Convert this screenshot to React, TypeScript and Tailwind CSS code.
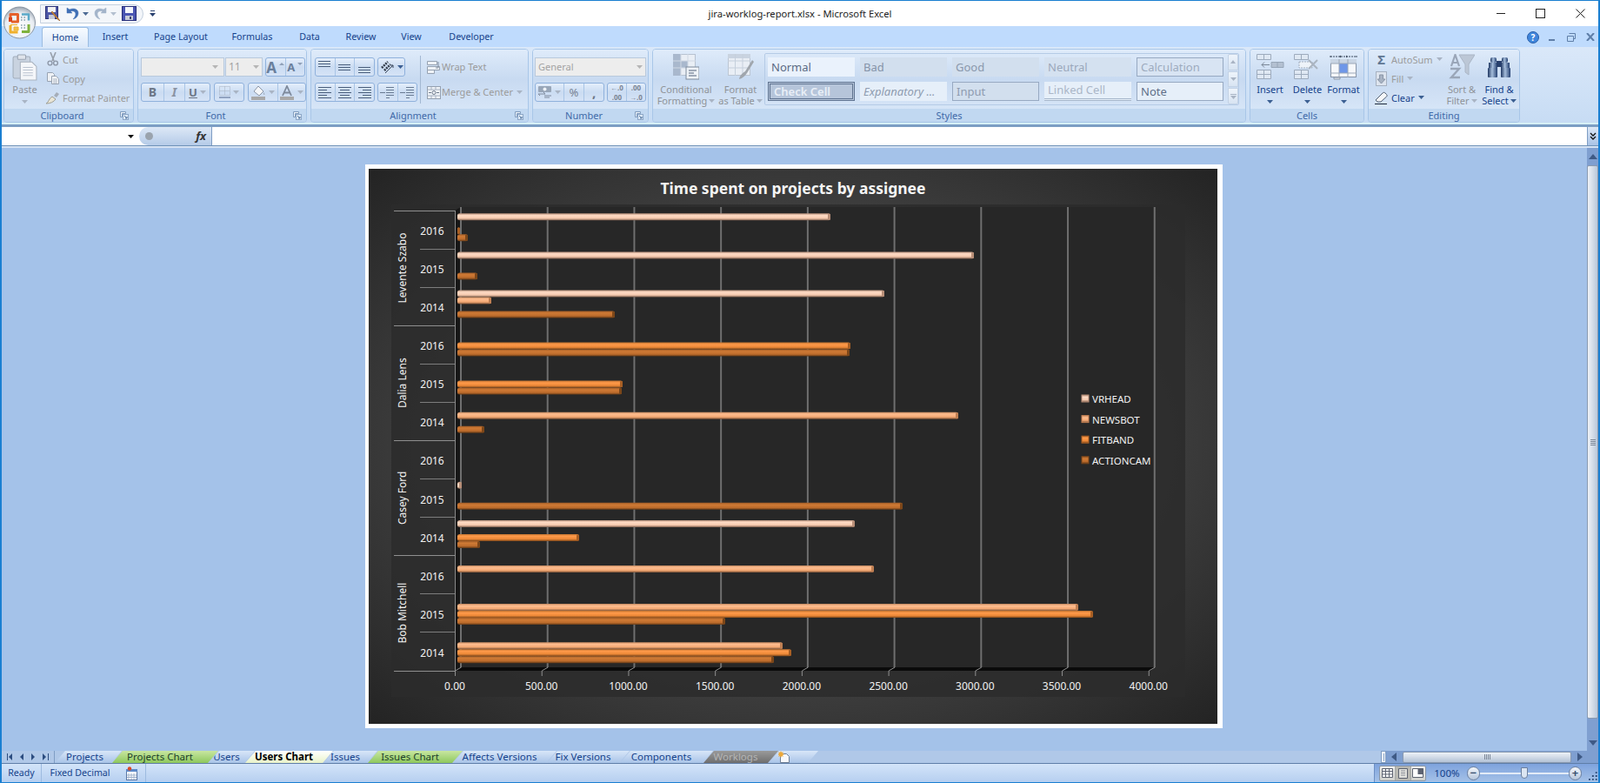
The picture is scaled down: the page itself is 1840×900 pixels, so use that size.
import React from "react";

const ui = "font-['Open_Sans',sans-serif]";

type Kids = { children?: React.ReactNode; className?: string };

const Caret = ({ color = "#8f99a8" }: { color?: string }) => (
  <svg width="7" height="4" viewBox="0 0 7 4" className="shrink-0">
    <path d="M0 0h7L3.5 4z" fill={color} />
  </svg>
);

const Launcher = () => (
  <svg width="10" height="10" viewBox="0 0 10 10" className="shrink-0">
    <path d="M.5.5h6v2h-4v4h-2z" fill="#eef4fb" stroke="#7f9bbd" />
    <rect x="3.5" y="3.5" width="6" height="6" fill="#dbe8f6" stroke="#8ea8c8" />
    <path d="M5 5l3 3M8 6v2H6" stroke="#55779f" fill="none" />
  </svg>
);

const Group = ({ label, launcher, className, children }: Kids & { label: string; launcher?: boolean }) => (
  <div className={`flex h-[85px] shrink-0 flex-col overflow-hidden rounded-[4px] border border-[#a8c6e8] ${className}`}>
    <div className="relative flex h-[69px] bg-linear-to-b from-[#dfebfa] via-[#c8daf1] to-[#d6e5f7]">{children}</div>
    <div className="flex h-[15px] items-center bg-[#c1d8f1]">
      <span className="flex-1 text-center text-[11px] leading-none text-[#3f69a8]">{label}</span>
      {launcher && (
        <span className="mr-[5px]">
          <Launcher />
        </span>
      )}
    </div>
  </div>
);

const BtnBox = ({ className, children }: Kids) => (
  <div className={`flex h-[22px] items-stretch overflow-hidden rounded-[3px] border border-[#8fb1dc] bg-linear-to-b from-[#e4eefb] via-[#cbdcf2] to-[#d5e3f6] ${className}`}>
    {children}
  </div>
);

const BtnCell = ({ className, children }: Kids) => (
  <div className={`flex items-center justify-center gap-[3px] border-r border-[#a9c5e6] last:border-r-0 ${className}`}>{children}</div>
);

const Lines = ({ rows, color = "#4a5f7c" }: { rows: [number, number, number][]; color?: string }) => (
  <svg width="17" height="16" viewBox="0 0 17 16">
    {rows.map(([x, y, w], i) => (
      <rect key={i} x={x} y={y} width={w} height="1" fill={color} />
    ))}
  </svg>
);

const PasteIcon = () => (
  <svg width="31" height="31" viewBox="0 0 28 30">
    <rect x="1" y="3" width="19" height="24" rx="1.5" fill="#c9d3e0" stroke="#a3aebb" />
    <rect x="6" y="1" width="9" height="5" rx="1" fill="#dfe4eb" stroke="#9aa5b3" />
    <path d="M9 9h13l5 5v15H9z" fill="#f4f6f9" stroke="#a9b3bf" />
    <path d="M12 15h11M12 18h11M12 21h11M12 24h11" stroke="#b9c2cf" />
  </svg>
);
const CutIcon = () => (
  <svg width="14" height="16" viewBox="0 0 14 16">
    <path d="M4 0l4 10M10 0L6 10" stroke="#98a0ab" strokeWidth="1.6" fill="none" />
    <circle cx="3.5" cy="12.5" r="2.4" fill="none" stroke="#8e98a8" strokeWidth="1.4" />
    <circle cx="10" cy="12.5" r="2.4" fill="none" stroke="#8e98a8" strokeWidth="1.4" />
  </svg>
);
const CopyIcon = () => (
  <svg width="14" height="14" viewBox="0 0 14 14">
    <path d="M.5.5h6l2 2v8h-8z" fill="#eef1f5" stroke="#98a3b2" />
    <path d="M5.5 4.5h5l3 3v6h-8z" fill="#f5f7fa" stroke="#98a3b2" />
    <path d="M7 8h5M7 10h5M7 12h5" stroke="#aab4c2" />
  </svg>
);
const BrushIcon = () => (
  <svg width="17" height="15" viewBox="0 0 17 15">
    <path d="M10 5l3-4 3 2-3 4z" fill="#a5adb8" />
    <path d="M1 14c3-1 3-6 7-8l4 3c-2 3-6 5-11 5z" fill="#e9e5d6" stroke="#9f9f94" />
  </svg>
);
const CondIcon = () => (
  <svg width="30" height="30" viewBox="0 0 30 30">
    <rect x="0.5" y="0.5" width="25" height="24" fill="#e9eef5" stroke="#b7c2d1" />
    <path d="M0 0h9v25H0z M9 8h8v8H9z" fill="#a9b8cd" />
    <path d="M9 0v25M17 0v25M0 8h26M0 16h26" stroke="#cfd8e4" />
    <rect x="15" y="15" width="15" height="14" fill="#eef2f7" stroke="#7f8c9d" />
    <path d="M18 19h9M18 22h6M18 25h9" stroke="#52627a" />
  </svg>
);
const TableIcon = () => (
  <svg width="30" height="30" viewBox="0 0 30 30">
    <rect x="0.5" y="0.5" width="25" height="24" fill="#e9eef5" stroke="#bcc6d3" />
    <path d="M0 0h26v5H0z" fill="#c9d3e0" />
    <path d="M8.500 0v25M17 0v25M0 8h26M0 16h26" stroke="#c5cfdc" />
    <path d="M13 29c1-5 4-7 7-9l8-13 2 2-8 13c-2 3-5 6-9 7z" fill="#a0a6ad" />
  </svg>
);
const InsertIcon = () => (
  <svg width="32" height="30" viewBox="0 0 32 30">
    <path d="M.5 .5h16v6h-16zM8.500 .5v6M.5 18.500h16v10h-16zM.5 23.500h16M8.500 18.500v10" fill="#dfe8f3" stroke="#9dabbd" />
    <path d="M17 9.500h14v6H17zM24 9.500v6" fill="#b3c0d1" stroke="#97a6b8" />
    <path d="M15 12.500H6M9 9.500l-3 3 3 3" fill="none" stroke="#7b8898" />
  </svg>
);
const DeleteIcon = () => (
  <svg width="32" height="30" viewBox="0 0 32 30">
    <path d="M.5 .5h16v6h-16zM8.500 .5v6M.5 18.500h16v10h-16zM.5 23.500h16M8.500 18.500v10" fill="#dfe8f3" stroke="#9dabbd" />
    <rect x="6" y="9" width="15" height="7" fill="#eef3f9" stroke="#a3afbf" strokeDasharray="2 1" />
    <path d="M17 7l10 10M27 7L17 17" stroke="#aab4c0" strokeWidth="2" />
  </svg>
);
const FormatIcon = () => (
  <svg width="32" height="30" viewBox="0 0 32 30">
    <path d="M1 2v2M31 2v2M1 3h30" stroke="#3d4a5e" strokeDasharray="2 1" />
    <path d="M11 3l2-1.500v3zM21 3l-2-1.500v3z" fill="#3d4a5e" />
    <rect x="1.500" y="6.500" width="29" height="20" fill="#f6f8fb" stroke="#8794a8" />
    <rect x="1" y="6" width="30" height="5" fill="#c9d5e4" />
    <rect x="11" y="11" width="10" height="11" fill="#6f97e8" />
    <path d="M11 6v21M21 6v21M1 11h30M1 22h30" stroke="#9ba7b8" />
    <path d="M5 27h7v2H5z" fill="#e6ebf2" stroke="#8d99aa" />
  </svg>
);
const EraserIcon = () => (
  <svg width="15" height="15" viewBox="0 0 15 15">
    <path d="M1 10l8-8c1-1 2-1 3 0l1.500 1.500c.8.8.8 1.800 0 2.600L7 12H3z" fill="#f4f6f8" stroke="#4f5c70" />
    <path d="M0 14.500h14" stroke="#1f2a3a" />
  </svg>
);
const FillIcon = () => (
  <svg width="13" height="17" viewBox="0 0 13 17">
    <rect x=".5" y=".5" width="12" height="16" fill="#dde4ee" stroke="#a6b1c1" />
    <path d="M4.500 4h4v5h2.500l-4.500 5L2 9h2.500z" fill="#a8b3c3" stroke="#8a96a8" />
  </svg>
);
const SortIcon = () => (
  <svg width="30" height="30" viewBox="0 0 30 30">
    <path d="M12 1h18l-7 11v12l-4-3v-9z" fill="#bcc7d6" stroke="#aab6c6" />
    <path d="M3 14L7.500 1 12 14M5 10h5" fill="none" stroke="#9aa6b8" strokeWidth="2.200" />
    <path d="M2 17h10L3 27h10" fill="none" stroke="#9aa6b8" strokeWidth="2.400" />
  </svg>
);
const FindIcon = () => (
  <svg width="28" height="28" viewBox="0 0 28 28">
    <defs>
      <linearGradient id="bino" x1="0" x2="1" y1="0" y2="0">
        <stop offset="0" stopColor="#1d3560" />
        <stop offset=".45" stopColor="#a5bddb" />
        <stop offset="1" stopColor="#243f70" />
      </linearGradient>
    </defs>
    <rect x="4" y="3" width="7" height="6" rx="2" fill="url(#bino)" />
    <rect x="17" y="3" width="7" height="6" rx="2" fill="url(#bino)" />
    <rect x="2" y="9" width="10" height="8" fill="url(#bino)" />
    <rect x="16" y="9" width="10" height="8" fill="url(#bino)" />
    <rect x="1" y="15" width="11" height="11" rx="1" fill="url(#bino)" />
    <rect x="16" y="15" width="11" height="11" rx="1" fill="url(#bino)" />
    <rect x="11" y="7" width="6" height="7" fill="#273f6c" />
  </svg>
);
const OfficeLogo = () => (
  <svg width="37" height="38" viewBox="0 0 37 38">
    <defs>
      <radialGradient id="orb" cx=".5" cy=".65" r=".65">
        <stop offset="0" stopColor="#ffffff" />
        <stop offset=".7" stopColor="#e9edf2" />
        <stop offset="1" stopColor="#9aa4b0" />
      </radialGradient>
    </defs>
    <circle cx="18.500" cy="19" r="18" fill="url(#orb)" stroke="#8b96a3" />
    <path d="M8 14V9.500h8.500V18H9" fill="none" stroke="#e5602a" strokeWidth="3" strokeLinejoin="round" />
    <path d="M21 9.500h8v7" fill="none" stroke="#5aa9c9" strokeWidth="2.500" strokeLinejoin="round" />
    <path d="M8 22v8h8.500" fill="none" stroke="#f0b02c" strokeWidth="3" strokeLinejoin="round" />
    <path d="M29 21v8.500h-8" fill="none" stroke="#7fb23c" strokeWidth="3" strokeLinejoin="round" />
    <path d="M8 21.500h8M12 24h5v4h-5z" fill="#eec14f" stroke="#f0b02c" />
    <path d="M20 13h1.500M23.500 13H25M20 16h1.500M23.500 16H25M20 22h1.500M23.500 22H25M20 25h1.500M23.500 25H25" stroke="#7f9aa8" strokeWidth="1.500" />
    <path d="M6 13h4v5H6z" fill="#d9441b" />
  </svg>
);
const SaveAsIcon = () => (
  <svg width="17" height="17" viewBox="0 0 17 17">
    <rect x=".5" y=".5" width="14" height="14" fill="#4d57a6" stroke="#2b3278" />
    <rect x="3" y="1" width="9" height="6" fill="#f3f3f3" />
    <rect x="4" y="10" width="7" height="5" fill="#c4c8d8" />
    <path d="M7 7l7 8 3 2-2-3-7-8z" fill="#e09a3a" stroke="#8a4a1d" strokeWidth=".6" />
  </svg>
);
const SaveIcon = () => (
  <svg width="17" height="17" viewBox="0 0 17 17">
    <rect x=".5" y=".5" width="16" height="16" fill="#4a55b2" stroke="#252c78" />
    <rect x="4" y="1" width="9" height="7" fill="#f4f6fb" />
    <rect x="4" y="11" width="9" height="5" fill="#c8ccd8" />
    <rect x="9" y="12" width="2" height="3" fill="#3a4070" />
  </svg>
);
const UndoIcon = ({ flip, color }: { flip?: boolean; color: string }) => (
  <svg width="15" height="15" viewBox="0 0 15 15" className={flip ? "-scale-x-100" : ""}>
    <path d="M1 1v6h6L5 5c3-1 6 0 6 3 0 2-1 4-3 6 4-1 6-4 6-7 0-5-6-6-10-4z" fill={color} stroke={color} strokeWidth=".5" />
  </svg>
);
const MacroIcon = () => (
  <svg width="15" height="16" viewBox="0 0 15 16">
    <rect x="1.500" y="3.500" width="12" height="12" fill="#fff" stroke="#5c78a5" />
    <path d="M1 3h13v3H1z" fill="#5d8ac9" />
    <path d="M4 8v7M7 8v7M10 8v7M2 10h11M2 12.500h11" stroke="#a1b3cc" />
    <circle cx="5" cy="2.500" r="2.200" fill="#d8492a" />
  </svg>
);
const NewSheetIcon = () => (
  <svg width="15" height="14" viewBox="0 0 15 14">
    <path d="M2.500 3.500h7l3 3v7h-10z" fill="#f6f8fb" stroke="#6d7f96" />
    <path d="M3 0l1 2 2-1-1 2 2 1-2 1 1 2-2-1-1 2-1-2-2 1 1-2-2-1 2-1-1-2 2 1z" fill="#eda93a" />
  </svg>
);

const SideItem = ({ icon, label, caret, dark, className }: { icon: React.ReactNode; label: string; caret?: boolean; dark?: boolean; className?: string }) => (
  <div className={`flex h-[22px] items-center whitespace-nowrap ${className}`}>
    <span className="flex w-[17px] shrink-0 justify-center">{icon}</span>
    <span className={`ml-[3px] text-[11px] leading-none ${dark ? "text-[#15428b]" : "text-[#9b9b9b]"}`}>{label}</span>
    {caret && (
      <span className="ml-[4px]">
        <Caret color={dark ? "#3b5f92" : "#a9b4c4"} />
      </span>
    )}
  </div>
);

const BigButton = ({ icon, lines, dark, className }: { icon: React.ReactNode; lines: string[]; dark?: boolean; className?: string }) => (
  <div className={`flex flex-col items-center pt-[5px] ${className}`}>
    <div className="flex h-[30px] items-center">{icon}</div>
    <div className={`mt-[4px] flex flex-col items-center text-[11px] leading-[13px] ${dark ? "text-[#15428b]" : "text-[#8f9398]"}`}>
      <span className="whitespace-nowrap">{lines[0]}</span>
      {lines.length > 1 ? (
        <span className="flex items-center gap-[2px] whitespace-nowrap">
          {lines[1]} <Caret color={dark ? "#3b5f92" : "#a9b4c4"} />
        </span>
      ) : (
        <span className="mt-[6px]">
          <Caret color={dark ? "#3b5f92" : "#a9b4c4"} />
        </span>
      )}
    </div>
  </div>
);

const StyleCell = ({ className, children }: Kids) => (
  <div className={`flex h-[22px] w-[100px] items-center overflow-hidden whitespace-nowrap pl-[4px] text-[13px] leading-none ${className}`}>{children}</div>
);

const Ribbon = () => (
  <div className="h-[89px] border-b-[2px] border-[#d6f0f6] bg-linear-to-b from-[#dae8f9] to-[#c7dcf4]">
    <div className="flex gap-[4px] pl-[2px] pt-[2px]">
      <Group label="Clipboard" launcher className="w-[150px]">
        <div className="flex w-[47px] flex-col items-center pt-[5px]">
          <PasteIcon />
          <span className="mt-[3px] text-[11px] leading-[13px] text-[#8f9398]">Paste</span>
          <span className="mt-[6px]">
            <Caret color="#a9b4c4" />
          </span>
        </div>
        <div className="flex flex-col">
          <SideItem icon={<CutIcon />} label="Cut" />
          <SideItem icon={<CopyIcon />} label="Copy" />
          <SideItem icon={<BrushIcon />} label="Format Painter" />
        </div>
      </Group>

      <Group label="Font" launcher className="w-[195px]">
        <div className="flex flex-col gap-[7px] pl-[3px] pt-[9px]">
          <div className="flex gap-[1px]">
            <div className="flex h-[22px] w-[96px] items-center justify-end border border-[#b9c9dc] bg-[#ededed] pr-[6px]">
              <Caret color="#b5b5b5" />
            </div>
            <div className="flex h-[22px] w-[43px] items-center justify-between border border-[#b9c9dc] bg-[#ededed] px-[3px] text-[12px] text-[#a3a3a3]">
              11 <Caret color="#b5b5b5" />
            </div>
            <BtnBox className="ml-[2px] w-[46px]">
              <BtnCell className="w-[23px] gap-0">
                <span className="font-['Liberation_Serif',serif] text-[17px] font-bold leading-none text-[#6a7f9c]">A</span>
                <span className="mb-[8px] h-0 w-0 border-x-[3px] border-b-[3px] border-x-transparent border-b-[#8fa0b8]" />
              </BtnCell>
              <BtnCell className="w-[22px] gap-0">
                <span className="font-['Liberation_Serif',serif] text-[13px] font-bold leading-none text-[#6a7f9c]">A</span>
                <span className="mb-[8px] h-0 w-0 border-x-[3px] border-t-[3px] border-x-transparent border-t-[#8fa0b8]" />
              </BtnCell>
            </BtnBox>
          </div>
          <div className="flex gap-[4px]">
            <BtnBox className="w-[80px]">
              <BtnCell className="w-[26px]">
                <span className="font-['Liberation_Serif',serif] text-[14px] font-bold leading-none text-[#6c7686]">B</span>
              </BtnCell>
              <BtnCell className="w-[24px]">
                <span className="font-['Liberation_Serif',serif] text-[14px] font-bold italic leading-none text-[#8a93a2]">I</span>
              </BtnCell>
              <BtnCell className="w-[28px]">
                <span className="font-['Liberation_Serif',serif] text-[13px] font-bold leading-none text-[#6c7686] underline">U</span>
                <Caret color="#a9b4c4" />
              </BtnCell>
            </BtnBox>
            <BtnBox className="w-[35px]">
              <BtnCell className="w-full">
                <svg width="13" height="14" viewBox="0 0 13 14">
                  <path d="M.5.5h12v10H.5zM6.500.5v10M.5 5.500h12" fill="none" stroke="#a5b0c0" strokeDasharray="1 1" />
                  <path d="M0 13h13" stroke="#7c8fb0" strokeWidth="1.400" />
                </svg>
                <Caret color="#a9b4c4" />
              </BtnCell>
            </BtnBox>
            <BtnBox className="w-[67px]">
              <BtnCell className="w-[34px]">
                <svg width="17" height="17" viewBox="0 0 17 17">
                  <path d="M3 7l5-6 6 6-5 5z" fill="#f4f6f9" stroke="#8b95a5" />
                  <path d="M14 8c1 1 2 3 1 3s-1-2-1-3z" fill="#9aa6b6" />
                  <rect x="0" y="13" width="16" height="4" fill="#a8a8a8" />
                </svg>
                <Caret color="#a9b4c4" />
              </BtnCell>
              <BtnCell className="w-[32px]">
                <svg width="17" height="17" viewBox="0 0 17 17">
                  <rect x="0" y="13" width="16" height="4" fill="#a8a8a8" />
                  <path d="M3 12L8 1l5 11M5 8.500h6" fill="none" stroke="#7e8a9c" strokeWidth="1.800" />
                </svg>
                <Caret color="#a9b4c4" />
              </BtnCell>
            </BtnBox>
          </div>
        </div>
      </Group>

      <Group label="Alignment" launcher className="w-[251px]">
        <div className="flex flex-col gap-[7px] pl-[4px] pt-[9px]">
          <div className="flex gap-[3px]">
            <BtnBox className="w-[69px]">
              <BtnCell className="w-[23px]">
                <Lines rows={[[1, 1, 14], [1, 4, 14], [1, 7, 14]]} />
              </BtnCell>
              <BtnCell className="w-[23px]">
                <Lines rows={[[1, 5, 14], [1, 8, 14], [1, 11, 14]]} />
              </BtnCell>
              <BtnCell className="w-[22px]">
                <Lines rows={[[1, 8, 14], [1, 11, 14], [1, 14, 14]]} />
              </BtnCell>
            </BtnBox>
            <BtnBox className="w-[32px]">
              <BtnCell className="w-full">
                <svg width="17" height="16" viewBox="0 0 17 16">
                  <path d="M2 9l7-7M5 12l7-7" stroke="#333c4a" strokeWidth="2.500" strokeDasharray="2 1" />
                  <path d="M6 15L15 6M15 6h-3M15 6v3" stroke="#39465a" fill="none" />
                </svg>
                <Caret color="#3b5f92" />
              </BtnCell>
            </BtnBox>
          </div>
          <div className="flex gap-[3px]">
            <BtnBox className="w-[69px]">
              <BtnCell className="w-[23px]">
                <Lines rows={[[1, 2, 15], [1, 5, 10], [1, 8, 15], [1, 11, 10], [1, 14, 15]]} />
              </BtnCell>
              <BtnCell className="w-[23px]">
                <Lines rows={[[1, 2, 15], [3, 5, 11], [1, 8, 15], [3, 11, 11], [1, 14, 15]]} />
              </BtnCell>
              <BtnCell className="w-[22px]">
                <Lines rows={[[1, 2, 15], [6, 5, 10], [1, 8, 15], [6, 11, 10], [1, 14, 15]]} />
              </BtnCell>
            </BtnBox>
            <BtnBox className="w-[46px]">
              <BtnCell className="w-[23px]">
                <Lines rows={[[0, 8, 6], [7, 2, 9], [7, 5, 9], [7, 8, 9], [7, 11, 9], [7, 14, 4]]} color="#6a7b93" />
              </BtnCell>
              <BtnCell className="w-[22px]">
                <Lines rows={[[0, 8, 6], [7, 2, 9], [7, 5, 9], [7, 8, 9], [7, 11, 9], [7, 14, 4]]} color="#6a7b93" />
              </BtnCell>
            </BtnBox>
          </div>
        </div>
        <div className="ml-[3px] mt-[7px] h-[55px] w-px bg-[#a3b8d2]" />
        <div className="ml-[7px] flex flex-col gap-[7px] pt-[9px]">
          <div className="flex h-[22px] items-center gap-[1px] text-[11px] text-[#9b9b9b]">
            <svg width="16" height="15" viewBox="0 0 16 15">
              <path d="M.5 .5h11v4H.5zM.5 6.500h14v4H.5zM.5 10.500h8v4H.5z" fill="#eef2f7" stroke="#95a1b1" />
              <path d="M13 1v7h-3" fill="none" stroke="#7e8a9c" />
            </svg>
            Wrap Text
          </div>
          <div className="flex h-[22px] items-center gap-[1px] text-[11px] text-[#9b9b9b]">
            <svg width="16" height="15" viewBox="0 0 16 15">
              <rect x=".5" y=".5" width="15" height="14" fill="#eef2f7" stroke="#95a1b1" />
              <path d="M1 4h14M1 11h14M5 1v3M10 1v3M5 11v3M10 11v3" stroke="#a5b0c0" />
              <path d="M2 7.500h3M11 7.500h3" stroke="#6f7b8c" />
              <circle cx="8" cy="7.500" r="2" fill="none" stroke="#6f7b8c" />
            </svg>
            Merge &amp; Center
            <span className="ml-[3px]">
              <Caret color="#a9b4c4" />
            </span>
          </div>
        </div>
      </Group>

      <Group label="Number" launcher className="w-[134px]">
        <div className="flex flex-col gap-[7px] pl-[2px] pt-[9px]">
          <div className="flex h-[22px] w-[128px] items-center justify-between border border-[#b9c9dc] bg-[#ededed] px-[3px] text-[11px] text-[#a3a3a3]">
            General <Caret color="#b5b5b5" />
          </div>
          <div className="flex gap-[3px]">
            <BtnBox className="w-[80px]">
              <BtnCell className="w-[33px]">
                <svg width="17" height="15" viewBox="0 0 17 15">
                  <rect x="1" y="0" width="15" height="7" rx="1" fill="#98a6b8" />
                  <circle cx="8.500" cy="3.500" r="2" fill="#eef2f7" />
                  <path d="M1 9h8l-2-2M1 9l2 2M8 11h8M8 13h6" stroke="#7e8a9c" fill="none" />
                </svg>
                <Caret color="#a9b4c4" />
              </BtnCell>
              <BtnCell className="w-[24px] text-[13px] leading-none text-[#7a8494]">%</BtnCell>
              <BtnCell className="w-[22px] text-[15px] font-bold leading-none text-[#6c7686]">,</BtnCell>
            </BtnBox>
            <BtnBox className="w-[45px]">
              <BtnCell className="w-[23px] flex-col gap-0 text-[8px] font-bold leading-[8px] text-[#7a8494]">
                <span>←.0</span>
                <span>.00</span>
              </BtnCell>
              <BtnCell className="w-[22px] flex-col gap-0 text-[8px] font-bold leading-[8px] text-[#7a8494]">
                <span>.00</span>
                <span>→.0</span>
              </BtnCell>
            </BtnBox>
          </div>
        </div>
      </Group>

      <Group label="Styles" className="w-[683px]">
        <BigButton icon={<CondIcon />} lines={["Conditional", "Formatting"]} className="w-[76px]" />
        <BigButton icon={<TableIcon />} lines={["Format", "as Table"]} className="w-[49px]" />
        <div className="ml-[3px] mt-[4px] flex h-[60px] w-[546px] rounded-[2px] border border-[#b5cbe6]">
          <div className="flex flex-col gap-[6px] pl-[3px] pt-[4px]">
            <div className="flex gap-[6px]">
              <StyleCell className="bg-[#eaf2fc] text-[#5b6b84]">Normal</StyleCell>
              <StyleCell className="bg-[#d2dfee] text-[#8593a8]">Bad</StyleCell>
              <StyleCell className="bg-[#d2dfee] text-[#8a98ac]">Good</StyleCell>
              <StyleCell className="bg-[#d4e1f0] text-[#9ba8bb]">Neutral</StyleCell>
              <StyleCell className="border border-[#97a9c2] bg-[#d8e4f3] text-[#9dabbe]">Calculation</StyleCell>
            </div>
            <div className="flex gap-[6px]">
              <StyleCell className="border-[3px] border-double border-[#5f7390] bg-[#b6c5da] font-semibold text-[#e9eff7]">Check Cell</StyleCell>
              <StyleCell className="bg-[#e6eff9] italic text-[#8f9cb0]">Explanatory ...</StyleCell>
              <StyleCell className="border border-[#97a9c2] bg-[#d2dfee] text-[#8e9bb0]">Input</StyleCell>
              <StyleCell className="border-b-[3px] border-double border-[#a6b6cb] bg-[#e6eff9] text-[#aab6c7]">Linked Cell</StyleCell>
              <StyleCell className="border border-[#97a9c2] bg-[#e6eff9] text-[#5f6f88]">Note</StyleCell>
            </div>
          </div>
          <div className="ml-[5px] flex w-[13px] flex-col gap-px">
            <div className="flex h-[19px] items-center justify-center rounded-t-[2px] border border-[#c3d2e5] bg-linear-to-b from-[#eef4fb] to-[#d8e4f2]">
              <span className="h-0 w-0 border-x-[3px] border-b-[4px] border-x-transparent border-b-[#a9b4c4]" />
            </div>
            <div className="flex h-[19px] items-center justify-center border border-[#c3d2e5] bg-linear-to-b from-[#eef4fb] to-[#d8e4f2]">
              <Caret color="#a9b4c4" />
            </div>
            <div className="flex h-[19px] flex-col items-center justify-center gap-px rounded-b-[2px] border border-[#c3d2e5] bg-linear-to-b from-[#eef4fb] to-[#d8e4f2]">
              <span className="h-px w-[7px] bg-[#a9b4c4]" />
              <Caret color="#a9b4c4" />
            </div>
          </div>
        </div>
      </Group>

      <Group label="Cells" className="w-[132px]">
        <BigButton dark icon={<InsertIcon />} lines={["Insert"]} className="w-[45px]" />
        <BigButton dark icon={<DeleteIcon />} lines={["Delete"]} className="w-[41px]" />
        <BigButton dark icon={<FormatIcon />} lines={["Format"]} className="w-[42px]" />
      </Group>

      <Group label="Editing" className="w-[175px]">
        <div className="flex w-[80px] flex-col pl-[6px]">
          <SideItem icon={<span className="text-[15px] font-bold leading-none text-[#5f7592]">Σ</span>} label="AutoSum" caret />
          <SideItem icon={<FillIcon />} label="Fill" caret />
          <SideItem icon={<EraserIcon />} label="Clear" caret dark />
        </div>
        <BigButton icon={<SortIcon />} lines={["Sort &", "Filter"]} className="ml-[6px] w-[42px]" />
        <BigButton dark icon={<FindIcon />} lines={["Find &", "Select"]} className="w-[44px]" />
      </Group>
    </div>
  </div>
);

const MENU: [string, string][] = [
  ["Insert", "w-[61px]"],
  ["Page Layout", "w-[90px]"],
  ["Formulas", "w-[74px]"],
  ["Data", "w-[58px]"],
  ["Review", "w-[60px]"],
  ["View", "w-[56px]"],
  ["Developer", "w-[82px]"],
];

const SHEETS: [string, string, string][] = [
  ["Projects", "w-[77px] pr-[8px]", "bg-linear-to-b from-[#d8e6f8] to-[#a9c4e8] text-[#15428b]"],
  ["Projects Chart", "w-[122px] pr-[12px]", "bg-linear-to-b from-[#c8e6a0] to-[#8ec85c] text-[#20402a]"],
  ["Users", "w-[53px] pr-[12px]", "bg-linear-to-b from-[#d8e6f8] to-[#a9c4e8] text-[#15428b]"],
  ["Users Chart", "w-[101px] pr-[12px]", "bg-linear-to-b from-[#ffffff] to-[#e9f3c9] font-bold text-black"],
  ["Issues", "w-[62px] pr-[12px]", "bg-linear-to-b from-[#d8e6f8] to-[#a9c4e8] text-[#15428b]"],
  ["Issues Chart", "w-[109px] pr-[12px]", "bg-linear-to-b from-[#c8e6a0] to-[#8ec85c] text-[#20402a]"],
  ["Affects Versions", "w-[119px] pr-[12px]", "bg-linear-to-b from-[#d8e6f8] to-[#a9c4e8] text-[#15428b]"],
  ["Fix Versions", "w-[95px] pr-[12px]", "bg-linear-to-b from-[#d8e6f8] to-[#a9c4e8] text-[#15428b]"],
  ["Components", "w-[107px] pr-[12px]", "bg-linear-to-b from-[#d8e6f8] to-[#a9c4e8] text-[#15428b]"],
  ["Worklogs", "w-[86px] pr-[12px]", "bg-linear-to-b from-[#9a9a9a] to-[#6f6f6f] text-[#b5b5b5]"],
];

const VScroll = () => (
  <div className="flex w-[13px] shrink-0 flex-col items-center bg-[#7f9fd0]">
    <div className="flex h-[20px] w-full items-center justify-center">
      <span className="h-0 w-0 border-x-[5px] border-b-[6px] border-x-transparent border-b-[#3f5a85]" />
    </div>
    <div className="flex h-[636px] w-full flex-col items-center justify-center gap-px rounded-[2px] border border-[#8a9ab0] bg-linear-to-r from-[#eef2f7] to-[#bac8da]">
      <span className="h-px w-[6px] bg-[#7b8797]" />
      <span className="h-px w-[6px] bg-[#7b8797]" />
      <span className="h-px w-[6px] bg-[#7b8797]" />
      <span className="h-px w-[6px] bg-[#7b8797]" />
    </div>
    <div className="flex flex-1 items-end justify-center pb-[6px]">
      <span className="h-0 w-0 border-x-[5px] border-t-[6px] border-x-transparent border-t-[#3f5a85]" />
    </div>
  </div>
);

const YEAR_ROWS = [
  "2016", "2015", "2014", "2016", "2015", "2014",
  "2016", "2015", "2014", "2016", "2015", "2014",
];
const PEOPLE = ["Levente Szabo", "Dalia Lens", "Casey Ford", "Bob Mitchell"];
const SERIES = ["VRHEAD", "NEWSBOT", "FITBAND", "ACTIONCAM"];
const CAPS = ["#b98f78", "#c07f52", "#a85f24", "#7d4719"];

// row (top to bottom), series, x where the bar ends
const BARS: [number, number, number][] = [
  [0, 0, 955], [0, 2, 529], [0, 3, 538],
  [1, 0, 1120], [1, 3, 549],
  [2, 0, 1017], [2, 1, 565], [2, 3, 707],
  [3, 2, 978], [3, 3, 977],
  [4, 2, 716], [4, 3, 715],
  [5, 1, 1102], [5, 3, 557],
  [7, 0, 531], [7, 3, 1038],
  [8, 0, 983], [8, 2, 666], [8, 3, 552],
  [9, 1, 1005],
  [10, 1, 1240], [10, 2, 1257], [10, 3, 834],
  [11, 1, 900], [11, 2, 910], [11, 3, 890],
];

const rowTop = (row: number) => 242 + row * 44.08;
const ticks = [0, 1, 2, 3, 4, 5, 6, 7, 8];

const Chart = () => (
  <svg viewBox="424 194 976 638" width="976" height="638" className="block font-['Lato',sans-serif]">
    <defs>
      <radialGradient id="chartBg" cx=".5" cy=".5" r=".72">
        <stop offset="0" stopColor="#585858" />
        <stop offset=".55" stopColor="#414141" />
        <stop offset="1" stopColor="#222222" />
      </radialGradient>
      <linearGradient id="s0" x1="0" x2="0" y1="0" y2="1">
        <stop offset="0" stopColor="#b8917b" />
        <stop offset=".3" stopColor="#ffdcc6" />
        <stop offset=".7" stopColor="#f5c9ae" />
        <stop offset="1" stopColor="#80604f" />
      </linearGradient>
      <linearGradient id="s1" x1="0" x2="0" y1="0" y2="1">
        <stop offset="0" stopColor="#c98d63" />
        <stop offset=".3" stopColor="#ffbd8f" />
        <stop offset=".7" stopColor="#f3a873" />
        <stop offset="1" stopColor="#7d5236" />
      </linearGradient>
      <linearGradient id="s2" x1="0" x2="0" y1="0" y2="1">
        <stop offset="0" stopColor="#c57531" />
        <stop offset=".3" stopColor="#ff9a4a" />
        <stop offset=".7" stopColor="#ec8837" />
        <stop offset="1" stopColor="#80481a" />
      </linearGradient>
      <linearGradient id="s3" x1="0" x2="0" y1="0" y2="1">
        <stop offset="0" stopColor="#a25d27" />
        <stop offset=".3" stopColor="#cf7a35" />
        <stop offset=".7" stopColor="#bd6c2c" />
        <stop offset="1" stopColor="#643a17" />
      </linearGradient>
    </defs>
    <rect x="424" y="194" width="976" height="638" fill="url(#chartBg)" />
    <rect x="450" y="235" width="913" height="566" fill="#2c2c2c" opacity=".85" />
    <rect x="530" y="238" width="797" height="529" fill="#272727" />
    <path d="M523 242l7-4v529l-7 4z" fill="#171717" />
    <path d="M523 771l7-4h798l-5 4z" fill="#0b0b0b" />
    {ticks.map((k) => (
      <line key={k} x1={530 + k * 99.72} x2={530 + k * 99.72} y1="238" y2="767" stroke="#6f6f6f" strokeWidth="2" />
    ))}
    {BARS.map(([row, s, end]) => {
      const y = rowTop(row) + 3.3 + s * 8;
      return (
        <g key={`${row}-${s}`}>
          <rect x="526" y={y} width={end - 526} height="8" rx="2.500" fill={`url(#s${s})`} />
          <rect x={end - 3} y={y + 0.5} width="3" height="7" rx="1" fill={CAPS[s]} />
        </g>
      );
    })}
    <path d="M453 242.500h70M453 374.500h70M453 506.500h70M453 638.500h70M453 771.500h70" stroke="#8f8f8f" />
    <path d="M483 286.500h40M483 330.500h40M483 418.500h40M483 462.500h40M483 550.500h40M483 594.500h40M483 682.500h40M483 726.500h40" stroke="#7d7d7d" />
    <line x1="523.500" x2="523.500" y1="242" y2="771" stroke="#8a8a8a" />
    {ticks.map((k) => (
      <path key={k} d={`M${523.5 + k * 99.72} 771v6M${523.5 + k * 99.72} 771l7-4`} stroke="#8f8f8f" fill="none" />
    ))}
    <text x="912" y="223" textAnchor="middle" fill="#f4f4f4" fontSize="17.500" fontWeight="700">
      Time spent on projects by assignee
    </text>
    {YEAR_ROWS.map((year, i) => (
      <text key={i} x="497" y={rowTop(i) + 28} textAnchor="middle" fill="#f2f2f2" fontSize="12">
        {year}
      </text>
    ))}
    {PEOPLE.map((name, i) => (
      <text key={name} x="0" y="0" transform={`translate(467 ${308 + i * 132.2}) rotate(-90)`} textAnchor="middle" fill="#f2f2f2" fontSize="12">
        {name}
      </text>
    ))}
    {ticks.map((k) => (
      <text key={k} x={523 + k * 99.72} y="793" textAnchor="middle" fill="#f2f2f2" fontSize="12">
        {(k * 500).toFixed(2)}
      </text>
    ))}
    {SERIES.map((name, i) => (
      <g key={name}>
        <rect x="1244" y={454 + i * 23.6} width="8" height="8" fill={`url(#s${i})`} stroke={CAPS[i]} />
        <text x="1256" y={463 + i * 23.6} fill="#f2f2f2" fontSize="11.500">
          {name}
        </text>
      </g>
    ))}
  </svg>
);

export default function App() {
  return (
    <div className={`relative flex h-[900px] w-[1840px] flex-col overflow-hidden border-x-[2px] border-y border-[#1a7fd1] bg-[#a4c2e9] ${ui}`}>
      <div className="absolute left-[2px] top-[6px] z-10">
        <OfficeLogo />
      </div>

      <div className="grid h-[29px] shrink-0 grid-cols-[1fr_auto_1fr] items-center bg-white">
        <div className="flex items-center">
          <div className="ml-[44px] flex h-[22px] w-[119px] items-center rounded-r-full border border-[#c3cfde] bg-[#f3f6fa] pl-[5px]">
            <SaveAsIcon />
            <span className="ml-[7px]">
              <UndoIcon color="#3f6fb5" />
            </span>
            <span className="ml-[4px]">
              <Caret color="#4c6a94" />
            </span>
            <span className="ml-[6px]">
              <UndoIcon flip color="#a3b4ca" />
            </span>
            <span className="ml-[4px]">
              <Caret color="#b3bfcf" />
            </span>
            <span className="ml-[6px]">
              <SaveIcon />
            </span>
          </div>
          <svg width="7" height="8" viewBox="0 0 7 8" className="ml-[7px]">
            <path d="M1 0h5v1H1zM0 3h7L3.500 7z" fill="#28406e" />
          </svg>
        </div>
        <span className="text-[11.200px] leading-none text-[#222]">jira-worklog-report.xlsx - Microsoft Excel</span>
        <div className="flex items-center justify-end gap-[35px] pr-[15px]">
          <span className="h-px w-[10px] bg-[#222]" />
          <span className="h-[11px] w-[11px] border border-[#222]" />
          <svg width="11" height="11" viewBox="0 0 11 11">
            <path d="M.5.5l10 10M10.500.5l-10 10" stroke="#222" />
          </svg>
        </div>
      </div>

      <div className="flex h-[24px] shrink-0 items-end bg-[#bfdbfd] pl-[46px]">
        <div className="flex h-[23px] w-[54px] items-center justify-center rounded-t-[3px] border-x border-t border-[#9cbce0] bg-linear-to-b from-[#f7fbff] to-[#dbe8f9] text-[10.700px] text-[#15428b]">
          Home
        </div>
        {MENU.map(([label, width]) => (
          <div key={label} className={`flex h-[23px] items-center justify-center text-[10.700px] text-[#15428b] ${width}`}>
            {label}
          </div>
        ))}
        <div className="ml-auto flex h-[23px] items-center pr-[4px]">
          <span className="flex h-[14px] w-[14px] items-center justify-center rounded-full border border-[#2a5ea8] bg-[#3f86dc] text-[10px] font-bold leading-none text-white">?</span>
          <span className="ml-[11px] mt-[6px] h-[2px] w-[7px] bg-[#5f7ea8]" />
          <svg width="10" height="10" viewBox="0 0 10 10" className="ml-[14px]">
            <path d="M2.500.5h7v6h-2M.5 3.500h7v6h-7z" fill="none" stroke="#5f7ea8" />
          </svg>
          <svg width="10" height="9" viewBox="0 0 10 9" className="ml-[12px]">
            <path d="M1 0l8 9M9 0L1 9" stroke="#5f7ea8" strokeWidth="2" />
          </svg>
        </div>
      </div>

      <Ribbon />

      <div className="h-[3px] shrink-0 bg-[#7c9ec4]" />
      <div className="flex h-[21px] shrink-0 items-stretch bg-white">
        <div className="flex w-[158px] items-center justify-end pr-[6px]">
          <Caret color="#111" />
        </div>
        <div className="flex w-[84px] items-center justify-between rounded-l-full border-r border-[#7f9dc4] bg-linear-to-b from-[#dde8f6] to-[#b5cbe8] pl-[7px] pr-[6px]">
          <span className="h-[9px] w-[9px] rounded-full bg-[#9aa3ad]" />
          <span className="font-['Liberation_Serif',serif] text-[13px] font-bold italic leading-none text-[#333]">fx</span>
        </div>
        <div className="flex-1" />
        <div className="flex w-[13px] items-center justify-center border-l border-[#7f9dc4] bg-linear-to-b from-[#dde8f6] to-[#a9c3e6]">
          <svg width="8" height="9" viewBox="0 0 8 9">
            <path d="M1 1l3 3 3-3M1 5l3 3 3-3" fill="none" stroke="#111" strokeWidth="1.300" />
          </svg>
        </div>
      </div>
      <div className="h-[1px] shrink-0 bg-[#6f92b8]" />
      <div className="h-[2px] shrink-0 bg-[#d5e2f3]" />

      <div className="flex min-h-0 flex-1">
        <div className="flex-1 pl-[418px] pt-[19px]">
          <div className="w-[986px] border-y-[5px] border-l-[4px] border-r-[6px] border-white">
            <Chart />
          </div>
        </div>
        <VScroll />
      </div>

      <div className="flex h-[15px] shrink-0 items-stretch border-b border-[#5f7ea8] bg-[#b0c8e8]">
        <div className="flex w-[61px] items-center justify-around border-r border-[#7f9dc4] px-[2px] text-[#2c4d80]">
          <svg width="7" height="8" viewBox="0 0 7 8"><path d="M0 0h1v8H0zM6 0v8L2 4z" fill="currentColor" /></svg>
          <svg width="5" height="8" viewBox="0 0 5 8"><path d="M4 0v8L0 4z" fill="currentColor" /></svg>
          <svg width="5" height="8" viewBox="0 0 5 8"><path d="M0 0v8l4-4z" fill="currentColor" /></svg>
          <svg width="7" height="8" viewBox="0 0 7 8"><path d="M6 0h1v8H6zM0 0v8l4-4z" fill="currentColor" /></svg>
        </div>
        {SHEETS.map(([label, width, look]) => (
          <div key={label} className={`-mr-[11px] flex items-center justify-center whitespace-nowrap text-[11.500px] leading-none [clip-path:polygon(0_100%,12px_0,100%_0,calc(100%-12px)_100%)] ${width} ${look}`}>
            {label}
          </div>
        ))}
        <div className="flex w-[57px] items-center justify-center bg-linear-to-b from-[#d8e6f8] to-[#a9c4e8] pr-[20px] [clip-path:polygon(0_100%,12px_0,100%_0,calc(100%-12px)_100%)]">
          <NewSheetIcon />
        </div>
        <div className="flex-1" />
        <div className="flex w-[6px] items-center justify-center border border-[#7f9dc4] bg-white">
          <span className="h-[9px] w-px bg-[#7f9dc4]" />
        </div>
        <div className="flex w-[244px] items-center bg-[#7f9fd0] pl-[6px] pr-[18px]">
          <span className="h-0 w-0 border-y-[5px] border-r-[6px] border-y-transparent border-r-[#3f5a85]" />
          <div className="ml-[7px] flex h-[13px] flex-1 items-center justify-center gap-px rounded-[2px] border border-[#8a9ab0] bg-linear-to-b from-[#eef2f7] to-[#b3c2d6]">
            <span className="h-[6px] w-px bg-[#7b8797]" />
            <span className="h-[6px] w-px bg-[#7b8797]" />
            <span className="h-[6px] w-px bg-[#7b8797]" />
            <span className="h-[6px] w-px bg-[#7b8797]" />
          </div>
          <span className="ml-[7px] h-0 w-0 border-y-[5px] border-l-[6px] border-y-transparent border-l-[#3f5a85]" />
        </div>
      </div>

      <div className="flex h-[21px] shrink-0 items-stretch bg-linear-to-b from-[#d3e4f9] to-[#b6cff0] text-[10.600px] text-[#15428b]">
        <div className="flex w-[46px] items-center justify-center border-r border-[#9dbbe0]">Ready</div>
        <div className="flex w-[88px] items-center justify-center">Fixed Decimal</div>
        <div className="flex w-[32px] items-center justify-center border-r border-[#9dbbe0]">
          <MacroIcon />
        </div>
        <div className="flex-1" />
        <div className="flex w-[258px] items-center border-l border-[#6d8fc4] bg-linear-to-b from-[#7ea3dd] to-[#a6c2e8] pl-[5px]">
          <div className="flex h-[18px] w-[56px] items-stretch overflow-hidden rounded-[2px] border border-[#8a97a8] bg-linear-to-b from-[#f0f0ee] to-[#cfd0cc]">
            <div className="flex flex-1 items-center justify-center border-r border-[#a5a8a8]">
              <svg width="13" height="11" viewBox="0 0 13 11"><path d="M.5.5h12v10H.5zM.5 3.500h12M.5 7h12M4.500.5v10M8.500.5v10" fill="#fff" stroke="#5c6270" /></svg>
            </div>
            <div className="flex flex-1 items-center justify-center border-r border-[#a5a8a8] bg-[#b8b8b2]">
              <svg width="11" height="12" viewBox="0 0 11 12"><path d="M.5.5h10v11H.5z" fill="#e0e0dc" stroke="#5c6270" /><path d="M3 3h5M3 5.500h5M3 8h5" stroke="#8a8f98" /></svg>
            </div>
            <div className="flex flex-1 items-center justify-center">
              <svg width="13" height="11" viewBox="0 0 13 11"><path d="M.5.5h12v10H.5z" fill="#fff" stroke="#5c6270" /><path d="M6.500 0h6v7h-6z" fill="#5c6270" /></svg>
            </div>
          </div>
          <span className="ml-[9px] text-[11.500px] leading-none text-[#15428b]">100%</span>
          <span className="ml-[8px] flex h-[16px] w-[16px] items-center justify-center rounded-full border border-[#6a7f9f] bg-linear-to-b from-[#f4f7fb] to-[#b7c7dc] text-[13px] font-bold leading-none text-[#39506f]">−</span>
          <div className="relative h-[2px] w-[105px] bg-[#e2ebf7]">
            <span className="absolute -top-[6px] left-[47px] h-[13px] w-[8px] rounded-b-[4px] border border-[#6a7f9f] bg-[#dbe5f2]" />
          </div>
          <span className="flex h-[16px] w-[16px] items-center justify-center rounded-full border border-[#6a7f9f] bg-linear-to-b from-[#f4f7fb] to-[#b7c7dc] text-[13px] font-bold leading-none text-[#39506f]">+</span>
          <svg width="11" height="11" viewBox="0 0 11 11" className="ml-[8px] mt-[6px]">
            <path d="M8 1h2v2H8zM4 5h2v2H4zM8 5h2v2H8zM0 9h2v2H0zM4 9h2v2H4zM8 9h2v2H8z" fill="#2f4c78" />
          </svg>
        </div>
      </div>
    </div>
  );
}
